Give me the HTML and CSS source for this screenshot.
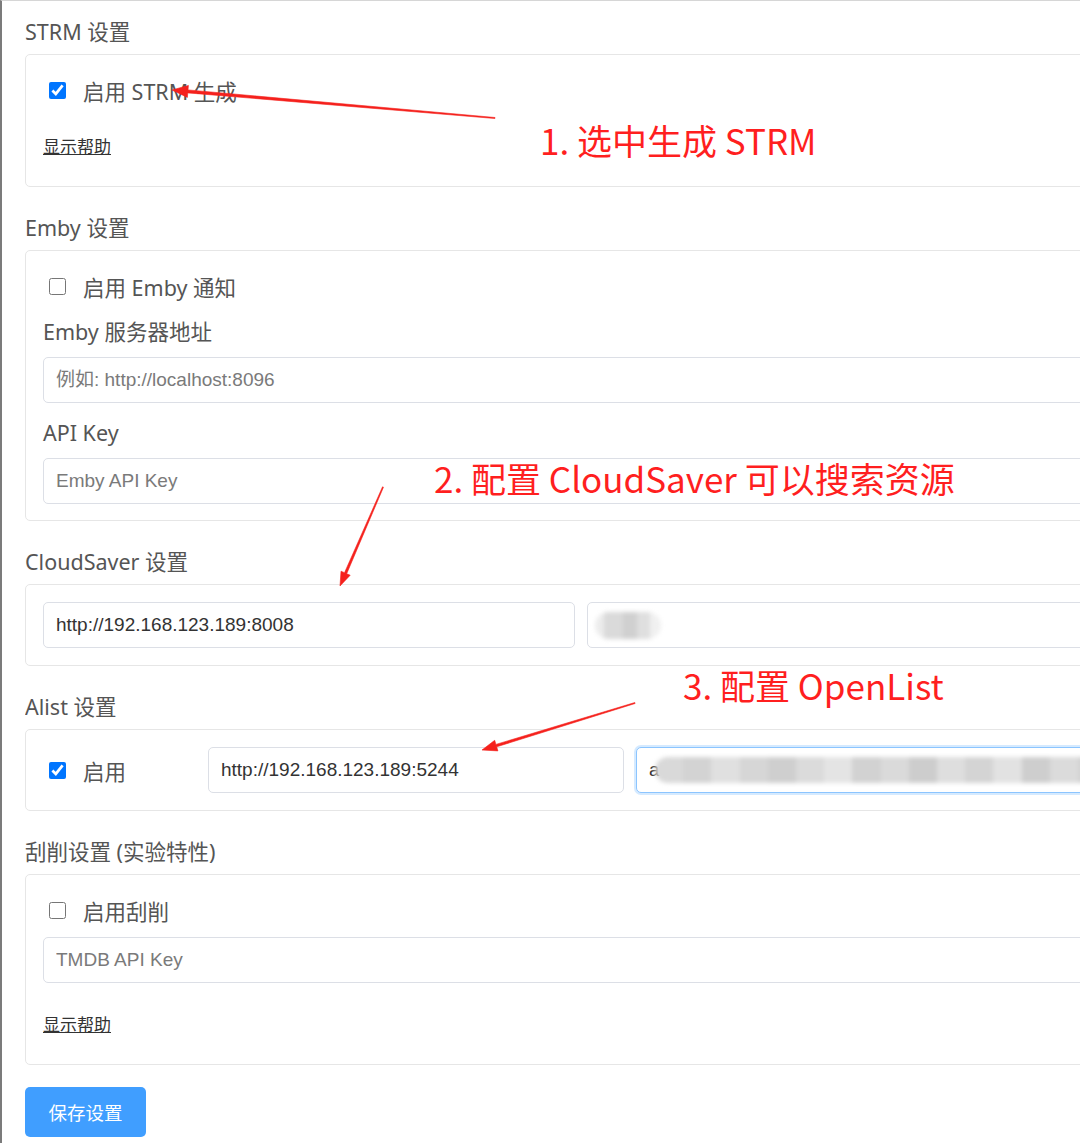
FILE: index.html
```html
<!DOCTYPE html>
<html lang="zh-CN">
<head>
    <meta charset="UTF-8">
    <meta name="viewport" content="width=device-width, initial-scale=1.0">
    <title>设置</title>
    <link rel="stylesheet" href="styles.css">
</head>
<body>
    <div class="page">
        <section class="group">
            <h2 class="group-title">STRM 设置</h2>
            <div class="card">
                <label class="check"><input type="checkbox" checked><span>启用 STRM 生成</span></label>
                <a class="help" href="#">显示帮助</a>
            </div>
        </section>

        <section class="group">
            <h2 class="group-title">Emby 设置</h2>
            <div class="card card-emby">
                <label class="check"><input type="checkbox"><span>启用 Emby 通知</span></label>
                <div class="field-label first">Emby 服务器地址</div>
                <input class="text-input" type="text" placeholder="例如: http://localhost:8096">
                <div class="field-label">API Key</div>
                <input class="text-input" type="text" placeholder="Emby API Key">
            </div>
        </section>

        <section class="group">
            <h2 class="group-title">CloudSaver 设置</h2>
            <div class="card card-row">
                <input class="text-input cs-url" type="text" value="http://192.168.123.189:8008">
                <div class="field">
                    <input class="text-input" type="text">
                    <span class="smudge smudge-small"></span>
                </div>
            </div>
        </section>

        <section class="group">
            <h2 class="group-title">Alist 设置</h2>
            <div class="card card-row">
                <label class="check check-col"><input type="checkbox" checked><span>启用</span></label>
                <input class="text-input alist-url" type="text" value="http://192.168.123.189:5244">
                <div class="field">
                    <input class="text-input focused" type="text" value="a">
                    <span class="smudge smudge-long"></span>
                </div>
            </div>
        </section>

        <section class="group">
            <h2 class="group-title">刮削设置 (实验特性)</h2>
            <div class="card card-scrape">
                <label class="check"><input type="checkbox"><span>启用刮削</span></label>
                <input class="text-input tmdb" type="text" placeholder="TMDB API Key">
                <a class="help" href="#">显示帮助</a>
            </div>
        </section>

        <button class="save">保存设置</button>

        <!-- annotations drawn on top of the screenshot -->
        <svg class="arrows" width="1080" height="1143" viewBox="0 0 1080 1143">
            <polygon points="495.04,117.5 188.03,89.91 188.42,85.42 172,90 187.38,97.38 187.77,92.89 494.96,118.5"/>
            <polygon points="382.54,486.8 344.5,572.7 341,571.2 340,586 350.2,575.2 346.7,573.7 383.46,487.2"/>
            <polygon points="634.85,702.52 495.9,744.4 494.7,740.3 482,750 497.9,750.9 496.7,746.8 635.15,703.48"/>
        </svg>
        <div class="note note-1">1. 选中生成 STRM</div>
        <div class="note note-2">2. 配置 CloudSaver 可以搜索资源</div>
        <div class="note note-3">3. 配置 OpenList</div>
    </div>
</body>
</html>
```

FILE: styles.css
```css
html, body {
    margin: 0;
    overflow: hidden;
    background: #fff;
}
.page {
    position: relative;
    width: 1120px;
    height: 1142px;
    padding: 17px 0 0 23px;
    border-left: 2px solid #7b7b7b;
    border-top: 1px solid #d6d6d6;
    font-family: "Noto Sans", "Noto Sans CJK SC", sans-serif;
    color: #555;
}
.group {
    margin-bottom: 27px;
}
.group-title {
    height: 28px;
    margin: 0 0 8px;
    font-size: 21.5px;
    font-weight: 400;
    line-height: 28px;
    color: #555;
    overflow: hidden;
}
.card {
    border: 1px solid #e6e6e6;
    border-radius: 5px;
    padding: 21px 17px 29px;
    display: flex;
    flex-direction: column;
    align-items: flex-start;
}
.card-emby {
    padding-bottom: 16px;
}
.card-row {
    flex-direction: row;
    align-items: center;
    gap: 12px;
    padding: 17px 17px;
}
.check {
    display: flex;
    align-items: center;
    height: 28px;
    font-size: 21.5px;
    color: #555;
}
.check input {
    width: 17px;
    height: 17px;
    margin: 0 17px 0 6px;
    accent-color: #0075ff;
}
.check-col {
    width: 153px;
    flex: none;
}
.field-label {
    height: 28px;
    margin-top: 16px;
    font-size: 21.5px;
    line-height: 28px;
    color: #555;
}
.field-label.first {
    margin-top: 18px;
}
.text-input {
    box-sizing: border-box;
    width: 100%;
    height: 46px;
    margin-top: 11px;
    padding: 0 12px;
    border: 1px solid #dcdfe6;
    border-radius: 5px;
    font-family: "Liberation Sans", "Noto Sans CJK SC", sans-serif;
    font-size: 19px;
    color: #333;
    background: #fff;
    outline: none;
}
.text-input::placeholder {
    color: #7a7a7a;
}
.card-row .text-input {
    margin-top: 0;
}
.tmdb {
    margin-top: 13px;
}
.cs-url {
    width: 532px;
    flex: none;
}
.alist-url {
    width: 416px;
    flex: none;
}
.field {
    position: relative;
    flex: 1;
}
.focused {
    border-color: #8cc5ff;
    box-shadow: 0 0 0 2px rgba(64, 158, 255, 0.22);
}
.smudge {
    position: absolute;
    top: 10px;
    height: 27px;
    border-radius: 14px;
    filter: blur(2px);
}
.smudge-small {
    left: 8px;
    width: 66px;
    background: linear-gradient(90deg, #ececec 0 14%, #dadada 14% 42%, #d0d0d0 42% 64%, #dfdfdf 64% 84%, #f0f0f0 84%);
}
.smudge-long {
    left: 19px;
    width: 470px;
    height: 26px;
    background: linear-gradient(90deg,
        #d9d9d9 0 6%, #d3d3d3 6% 12%, #e0e0e0 12% 18%, #d6d6d6 18% 24%,
        #cfcfcf 24% 30%, #dbdbdb 30% 36%, #e4e4e4 36% 42%, #d2d2d2 42% 48%,
        #dadada 48% 54%, #cdcdcd 54% 60%, #dedede 60% 66%, #d4d4d4 66% 72%,
        #e2e2e2 72% 78%, #cecece 78% 84%, #dbdbdb 84% 90%, #d3d3d3 90%);
}
.help {
    display: block;
    height: 20px;
    margin-top: 33px;
    font-size: 17px;
    line-height: 20px;
    color: #333;
    text-decoration: underline;
}
.card-scrape .help {
    margin-top: 32px;
}
.save {
    display: block;
    width: 121px;
    height: 50px;
    margin-top: -5px;
    border: none;
    border-radius: 5px;
    background: #409eff;
    color: #fff;
    font-family: "Noto Sans CJK SC", sans-serif;
    font-size: 18.5px;
    cursor: pointer;
}
.arrows {
    position: absolute;
    left: -2px;
    top: -1px;
    pointer-events: none;
}
.arrows polygon {
    fill: #f5211d;
    stroke: #f5211d;
    stroke-width: 0.6;
    stroke-linejoin: round;
}
.note {
    position: absolute;
    font-family: "Noto Sans CJK SC", sans-serif;
    font-size: 35px;
    line-height: 44px;
    color: #ff1f1f;
    white-space: nowrap;
}
.note-1 {
    left: 538px;
    top: 117px;
}
.note-2 {
    left: 432px;
    top: 455px;
}
.note-3 {
    left: 681px;
    top: 662px;
}
```
